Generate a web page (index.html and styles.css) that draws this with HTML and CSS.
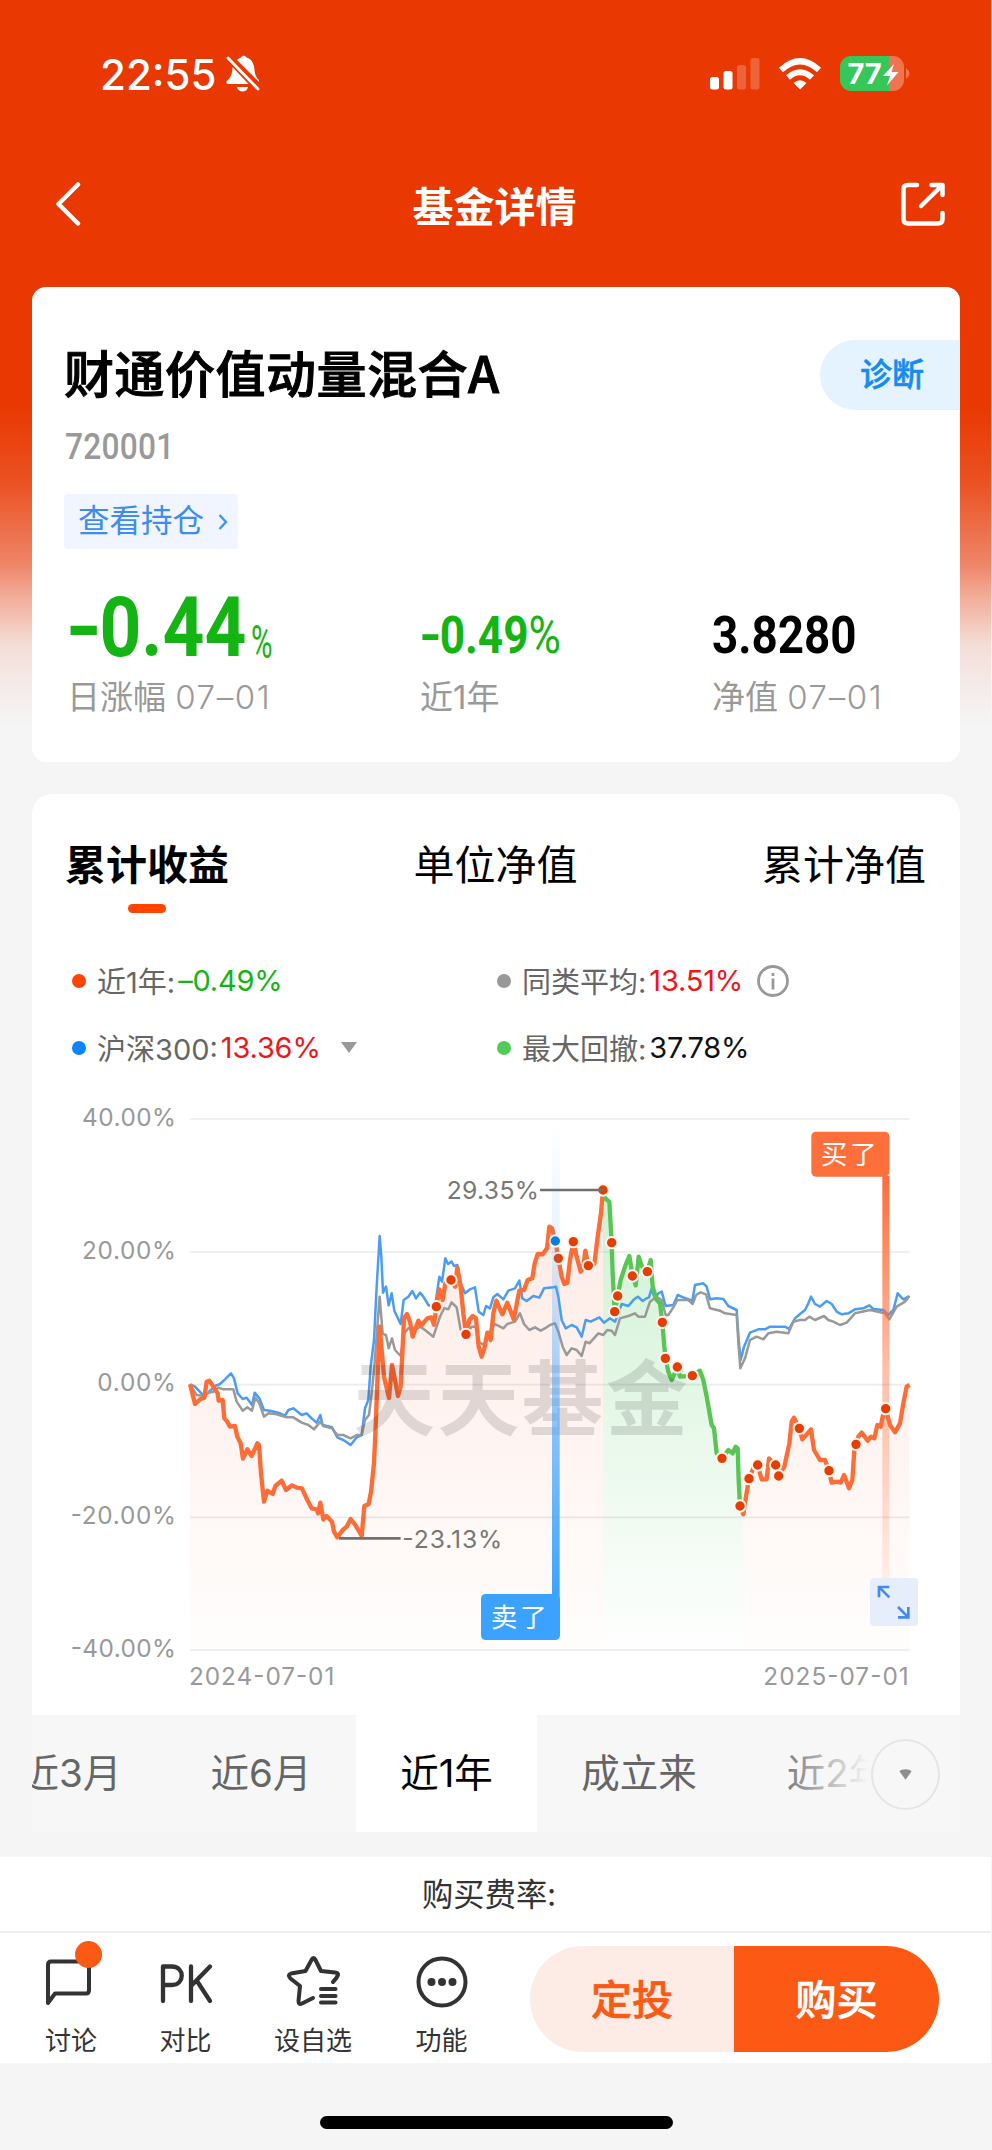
FILE: index.html
```html
<!DOCTYPE html>
<html lang="zh-CN">
<head>
<meta charset="utf-8">
<title>基金详情</title>
<link rel="stylesheet" href="styles.css">
</head>
<body>
<div class="phone">
  <header class="status">
    <div class="status-left">
      <span class="time">22:55</span>
      <svg class="bell" width="34" height="38" viewBox="0 0 34 38">
        <path fill="#fff" d="M11 5 C12 4 13.500 3 15 2.500 C16 0 19 0 20.500 2.500 C26 4 28 9 28.500 15 C29 20 30 22 33 25 L33 27 Z M7 9 L26 29 L2 29 C0 29 0 27 1 26 C5 22 6 19 6.500 13 Z M11 32 H22 C21 38 12 38 11 32 Z"/>
        <path stroke="#e93802" stroke-width="7" d="M1 1 L33 35"/>
        <path stroke="#fff" stroke-width="2.800" stroke-linecap="round" d="M2 3 L32 34"/>
      </svg>
    </div>
    <div class="status-right">
      <svg width="50" height="32" viewBox="0 0 50 32" fill="#fff">
        <rect x="0" y="19" width="9" height="12.500" rx="2.500"/><rect x="13.500" y="13" width="9" height="18.500" rx="2.500"/>
        <g opacity=".22"><rect x="27" y="7" width="9" height="24.500" rx="2.500"/><rect x="40.500" y="0" width="9" height="31.500" rx="2.500"/></g>
      </svg>
      <svg class="wifi" width="44" height="32" viewBox="0 0 44 32" fill="none" stroke="#fff" stroke-width="6">
        <path d="M3 12 Q22 -5.500 41 12"/><path d="M10 19.500 Q22 9 34 19.500"/><path fill="#fff" stroke="none" d="M15.500 25 Q22 19.500 28.500 25 L22 31.500Z"/>
      </svg>
      <svg width="72" height="36" viewBox="0 0 72 36">
        <defs><clipPath id="cell"><rect width="64" height="35" rx="11"/></clipPath></defs>
        <g clip-path="url(#cell)"><rect width="49" height="35" fill="#35c759"/><rect x="49" width="16" height="35" fill="#f07450"/></g>
        <path fill="#f07450" d="M66 12 Q73 17.500 66 23Z"/>
        <text x="7.500" y="28" class="cell-text" textLength="34">77</text>
        <path fill="#fff" d="M54 8 L43 20 H50 L47 29.500 L58.500 16 H51.500Z"/>
      </svg>
    </div>
  </header>

  <nav class="navbar">
    <svg width="26" height="46" viewBox="0 0 26 46" fill="none" stroke="#fff" stroke-width="4.500" stroke-linecap="round" stroke-linejoin="round"><path d="M23 3.500 L3.500 23 L23 42.500"/></svg>
    <h1>基金详情</h1>
    <svg width="46" height="46" viewBox="0 0 46 46" fill="none" stroke="#fff" stroke-width="4.500" stroke-linecap="round" stroke-linejoin="round"><path d="M17 4 H8 Q3.500 4 3.500 8 V38 Q3.500 42.500 8 42.500 H38 Q42.500 42.500 42.500 38 V32"/><path d="M31.500 4 H42.500 V14 M42 4.500 L21 25"/></svg>
  </nav>

  <section class="card summary">
    <div class="name-row"><h2>财通价值动量混合A</h2><span class="diagnose">诊断</span></div>
    <div class="code"><span class="din">720001</span></div>
    <div class="holdings"><span>查看持仓</span><svg width="10" height="18" viewBox="0 0 10 18" fill="none" stroke="#3d97f2" stroke-width="2.400"><path d="M1.500 2 L8 9 L1.500 16"/></svg></div>
    <div class="stats">
      <div><div class="value green big"><span class="din"><s>-</s>0.44</span><span class="din pct">%</span></div><div class="label">日涨幅 <i>07–01</i></div></div>
      <div><div class="value green"><span class="din mid"><s>-</s>0.49<b>%</b></span></div><div class="label">近1年</div></div>
      <div><div class="value"><span class="din">3.8280</span></div><div class="label">净值 <i>07–01</i></div></div>
    </div>
  </section>

  <section class="card trend">
    <div class="tabs"><span class="tab on">累计收益</span><span class="tab">单位净值</span><span class="tab">累计净值</span></div>
    <div class="legend">
      <div class="item"><i class="dot orange"></i><span>近1年:</span><em class="green">–0.49%</em></div>
      <div class="item"><i class="dot gray"></i><span>同类平均:</span><em class="red">13.51%</em>
        <svg class="info" width="32" height="32" viewBox="0 0 32 32" fill="none" stroke="#999" stroke-width="2.800"><circle cx="16" cy="16" r="14.500"/><path d="M16 13.500 V24.500"/><path d="M16 8 V11"/></svg></div>
      <div class="item"><i class="dot blue"></i><span>沪深300:</span><em class="red">13.36%</em>
        <svg class="caret" width="16" height="11" viewBox="0 0 16 11" fill="#999"><path d="M0 0 H16 L8 11Z"/></svg></div>
      <div class="item"><i class="dot lime"></i><span>最大回撤:</span><em class="dark">37.78%</em></div>
    </div>

    <svg class="chart" viewBox="-414 -30 2784 1875">
      <defs>
        <linearGradient id="warm" gradientUnits="userSpaceOnUse" x1="0" y1="270" x2="0" y2="1650"><stop offset="0" stop-color="#f4511e" stop-opacity=".12"/><stop offset="1" stop-color="#f4511e" stop-opacity=".01"/></linearGradient>
        <linearGradient id="fresh" gradientUnits="userSpaceOnUse" x1="0" y1="270" x2="0" y2="1620"><stop offset="0" stop-color="#40c850" stop-opacity=".25"/><stop offset="1" stop-color="#40c850" stop-opacity=".01"/></linearGradient>
        <linearGradient id="sell" gradientUnits="userSpaceOnUse" x1="0" y1="70" x2="0" y2="1482"><stop offset="0" stop-color="#3ba3ff" stop-opacity="0"/><stop offset=".3" stop-color="#3ba3ff" stop-opacity=".15"/><stop offset=".6" stop-color="#3ba3ff" stop-opacity=".55"/><stop offset="1" stop-color="#3ba3ff"/></linearGradient>
        <linearGradient id="buy" gradientUnits="userSpaceOnUse" x1="0" y1="230" x2="0" y2="1490"><stop offset="0" stop-color="#ff6c39"/><stop offset=".45" stop-color="#ff6c39" stop-opacity=".45"/><stop offset="1" stop-color="#ff6c39" stop-opacity=".06"/></linearGradient>
      </defs>

      <g class="grid"><path d="M60 57 H2219 M60 456 H2219 M60 854 H2219 M60 1252 H2219 M60 1650 H2219"/></g>
      <g class="axis" text-anchor="end">
        <text x="18" y="77" textLength="282">40.00%</text><text x="18" y="476" textLength="282">20.00%</text><text x="18" y="874" textLength="236">0.00%</text><text x="18" y="1272" textLength="316">-20.00%</text><text x="18" y="1670" textLength="316">-40.00%</text>
      </g>
      <g class="axis"><text x="57" y="1755" textLength="436">2024-07-01</text><text x="1780" y="1755" textLength="436">2025-07-01</text></g>

      <path fill="url(#warm)" d="M60 853 L75 912 90 898 103 893 110 845 118 842 143 880 158 900 163 955 180 980 195 978 202 1010 212 1030 219 1076 232 1048 245 1068 262 1030 267 1035 273 1120 282 1205 292 1172 308 1182 316 1158 335 1142 348 1170 366 1156 396 1165 425 1225 444 1240 451 1208 460 1258 486 1265 502 1312 542 1257 575 1308 583 1218 596 1212 603 1175 612 1090 617 980 629 680 657 894 666 795 684 888 692 860 702 655 711 642 728 710 745 662 792 674 808 568 843 540 862 503 872 560 888 703 908 648 918 655 935 770 952 698 962 720 979 602 997 643 1012 608 1031 658 1048 572 1062 570 1087 535 1103 462 1131 445 1138 380 1156 423 1183 552 1192 548 1210 425 1232 515 1246 452 1255 497 1273 492 1283 410 1299 270 V1650 H60Z"/>
      <path fill="url(#fresh)" d="M1299 270 L1305 295 1318 305 1325 428 1334 635 1352 540 1378 468 1397 556 1406 470 1432 515 1442 480 1448 560 1470 610 1487 775 1505 840 1522 802 1567 827 1590 815 1610 890 1625 975 1640 1060 1656 1075 1675 1050 1703 1045 1710 1218 1720 1243 V1650 H1299Z"/>
      <path fill="url(#warm)" d="M1720 1243 L1737 1136 1763 1095 1775 1138 1790 1138 1797 1075 1826 1128 1843 1100 1858 1030 1872 953 1897 1018 1923 988 1932 1050 1965 1080 1985 1148 2012 1148 2022 1125 2037 1165 2047 1140 2058 1033 2075 998 2093 1022 2113 1015 2147 926 2175 997 2190 970 2210 860 2218 853 V1650 H1720Z"/>

      <path class="line thin blue-line" d="M60 853 L75 860 97 883 112 880 135 858 150 852 165 838 183 820 192 835 203 880 218 897 230 893 246 915 254 878 268 895 282 930 300 932 325 938 345 947 355 930 370 925 395 945 410 940 425 955 440 968 451 945 458 975 486 982 502 1012 520 1020 542 1035 560 1012 575 1005 585 925 595 900 602 800 612 720 620 560 629 408 634 470 639 578 648 560 656 616 665 580 673 632 692 672 701 600 715 590 727 573 738 595 750 578 760 590 775 615 790 622 798 600 808 530 816 545 826 475 834 492 845 485 852 498 862 495 872 550 885 580 900 568 915 562 926 635 940 645 948 618 960 625 970 592 982 582 1000 598 1015 572 1035 565 1048 542 1057 595 1070 603 1090 588 1108 593 1122 565 1150 562 1158 560 1165 590 1175 660 1187 685 1205 675 1220 682 1235 710 1247 660 1262 665 1288 652 1302 668 1320 655 1335 665 1345 640 1355 612 1375 618 1392 598 1404 590 1418 603 1430 595 1437 592 1444 568 1455 595 1465 580 1475 575 1487 618 1510 615 1523 585 1540 592 1567 602 1575 555 1600 550 1610 560 1620 598 1640 595 1660 597 1675 618 1700 630 1706 720 1712 780 1722 740 1740 698 1765 688 1785 688 1800 680 1845 680 1857 687 1875 655 1890 642 1905 630 1915 610 1923 590 1935 612 1950 620 1970 603 1985 612 2000 635 2015 643 2035 640 2055 628 2080 625 2098 616 2110 627 2140 630 2155 645 2170 630 2183 580 2200 598 2218 588"/>
      <path class="line thin gray-line" d="M60 853 L80 885 100 888 115 878 130 875 145 863 160 868 190 868 200 905 218 932 232 922 246 932 256 893 268 910 282 950 295 940 320 943 350 952 370 952 395 968 415 975 432 988 451 965 460 978 486 985 502 1005 520 1005 542 1015 560 1005 575 1005 585 960 597 945 605 880 613 800 622 680 629 590 638 702 648 705 656 745 666 715 675 750 692 768 703 700 715 685 735 690 750 680 765 690 790 710 800 680 810 650 822 625 835 628 845 607 860 622 872 690 890 700 905 680 918 680 928 728 945 735 955 700 975 672 1000 685 1012 672 1035 665 1050 640 1062 672 1078 690 1095 682 1112 692 1130 682 1140 675 1155 670 1165 695 1178 740 1190 765 1205 745 1220 750 1235 768 1247 725 1258 730 1285 700 1300 705 1312 690 1325 692 1335 705 1350 655 1375 648 1395 640 1405 650 1425 650 1440 605 1460 590 1475 600 1487 645 1495 645 1510 622 1522 600 1555 600 1568 612 1578 585 1592 577 1608 583 1620 625 1650 632 1665 640 1700 645 1706 740 1711 805 1725 775 1740 720 1760 710 1780 718 1795 700 1820 695 1855 700 1870 665 1890 660 1905 660 1918 650 1935 660 1962 648 1975 660 1990 665 2010 675 2030 668 2055 640 2100 630 2145 640 2158 658 2180 620 2205 605 2218 588"/>
      <path class="line fund" d="M60 853 L75 912 90 898 103 893 110 845 118 842 130 860 143 880 146 902 158 900 163 955 172 965 180 980 195 978 202 1010 212 1030 219 1076 232 1048 245 1068 262 1030 267 1035 273 1120 282 1205 292 1172 308 1182 316 1158 335 1142 348 1170 366 1156 380 1163 396 1165 412 1200 425 1225 440 1228 444 1240 451 1208 460 1258 470 1248 486 1265 492 1295 502 1312 518 1290 530 1280 542 1257 556 1275 575 1308 583 1218 596 1212 603 1175 612 1090 617 980 623 820 629 680 636 760 642 830 657 894 666 795 675 840 684 888 692 860 697 760 702 655 711 642 720 665 728 710 745 662 754 676 772 655 784 652 792 674 799 620 808 568 818 600 826 550 843 540 855 560 862 503 872 560 880 640 888 703 898 660 908 648 918 655 926 740 935 770 943 745 952 698 962 720 970 640 979 602 997 643 1012 608 1031 658 1048 572 1062 570 1073 540 1087 535 1094 490 1103 462 1118 463 1131 445 1138 380 1146 385 1156 423 1165 475 1175 530 1183 552 1192 548 1200 480 1210 425 1220 470 1232 515 1240 500 1246 452 1255 497 1273 492 1283 410 1293 340 1299 270"/>
      <path class="line fund" d="M1710 1218 L1720 1243 1728 1190 1737 1136 1750 1105 1763 1095 1775 1138 1790 1138 1797 1075 1817 1095 1826 1128 1843 1100 1858 1030 1865 965 1872 953 1888 985 1897 1018 1923 988 1932 1050 1950 1080 1965 1080 1977 1112 1985 1148 2000 1145 2012 1148 2022 1125 2037 1165 2047 1140 2053 1050 2058 1033 2065 1010 2075 998 2093 1022 2103 1010 2113 1015 2122 975 2132 980 2140 940 2147 926 2160 975 2175 997 2190 970 2200 910 2210 860 2219 855"/>
      <path class="line fall" d="M1299 275 L1305 295 1318 305 1325 428 1328 520 1334 635 1343 588 1352 540 1365 500 1378 468 1388 528 1397 556 1406 470 1416 500 1432 515 1442 480 1448 560 1460 600 1470 610 1477 667 1483 740 1487 775 1495 815 1505 840 1522 802 1530 830 1567 827 1590 812 1600 840 1610 890 1625 975 1632 985 1640 1060 1656 1075 1675 1050 1688 1060 1697 1040 1703 1045 1706 1140 1710 1218"/>

      <text class="watermark" x="550" y="988" textLength="1003">天天基金</text>

      <g class="trades">
        <circle cx="799" cy="620" r="17"/><circle cx="843" cy="540" r="17"/><circle cx="888" cy="703" r="17"/><circle cx="1165" cy="475" r="17"/><circle cx="1210" cy="425" r="17"/><circle cx="1255" cy="497" r="17"/><circle cx="1299" cy="270" r="17"/><circle cx="1325" cy="428" r="17"/><circle cx="1343" cy="588" r="17"/><circle cx="1334" cy="635" r="17"/><circle cx="1387" cy="528" r="17"/><circle cx="1432" cy="515" r="17"/><circle cx="1477" cy="667" r="17"/><circle cx="1486" cy="775" r="17"/><circle cx="1522" cy="801" r="17"/><circle cx="1567" cy="827" r="17"/><circle cx="1656" cy="1075" r="17"/><circle cx="1710" cy="1218" r="17"/><circle cx="1737" cy="1136" r="17"/><circle cx="1763" cy="1095" r="17"/><circle cx="1817" cy="1095" r="17"/><circle cx="1826" cy="1128" r="17"/><circle cx="1888" cy="985" r="17"/><circle cx="1977" cy="1112" r="17"/><circle cx="2058" cy="1033" r="17"/>
      </g>
      <rect x="1146" y="70" width="23" height="1420" fill="url(#sell)"/>
      <rect x="2137" y="228" width="21" height="1262" fill="url(#buy)"/>
      <g class="trades"><circle cx="1156" cy="423" r="17" class="sold"/><circle cx="2147" cy="926" r="17"/></g>

      <path class="leader" d="M1110 270 H1299 M507 1315 H692"/>
      <g class="peak"><text x="830" y="296" textLength="277">29.35%</text><text x="697" y="1343" textLength="300">-23.13%</text></g>

      <rect x="1924" y="95" width="234" height="135" rx="14" fill="#ff6f3c"/><text class="tag" x="1952" y="192" textLength="168">买了</text>
      <rect x="933" y="1482" width="237" height="138" rx="14" fill="#3ba3ff"/><text class="tag" x="962" y="1581" textLength="168">卖了</text>

      <rect x="2100" y="1434" width="144" height="144" rx="12" fill="#e3ecfc" fill-opacity=".9"/>
      <path class="expand" d="M2127 1492 V1461 H2158 M2129 1463 L2158 1492 M2184 1552 H2215 V1521 M2213 1550 L2184 1521"/>
    </svg>

    <div class="ranges">
      <span class="cut">近3月</span><span>近6月</span><span class="on">近1年</span><span>成立来</span><span class="last">近2年</span>
      <div class="more"><svg width="15" height="11" viewBox="0 0 16 11" fill="#8e8e8e"><path d="M0 0 H16 L8 11Z"/></svg></div>
    </div>
  </section>

  <footer class="bottom">
    <div class="fee">购买费率:</div>
    <div class="actions">
      <div class="act talk"><svg width="60" height="68" viewBox="0 0 60 68" fill="none" stroke="#333" stroke-width="4" stroke-linejoin="round"><path d="M7 54 V17 Q7 13.500 10 13.500 H48 V42 Q48 45.500 45 45.500 H14 L7 55Z"/><circle cx="47.500" cy="6.500" r="13.500" fill="#fc5a14" stroke="none"/></svg><span>讨论</span></div>
      <div class="act pk"><svg width="60" height="68" viewBox="0 0 60 68" fill="none" stroke="#333" stroke-width="4.300" stroke-linecap="round" stroke-linejoin="round"><path d="M7 53 V18.500 H16 C29 18.500 29 37 16 37 H7 M35 18.500 V53 M54 18.500 L35 38 M41 33 L54 53"/></svg><span>对比</span></div>
      <div class="act fav"><svg width="60" height="68" viewBox="0 0 60 68" fill="none" stroke="#333" stroke-width="4" stroke-linecap="round" stroke-linejoin="round"><path d="M50 34 Q54 30 55 27 Q55.500 25 52 24.500 L38 23 L32.500 12 Q30.500 8 28.500 12 L22.500 23 L8 25.500 Q4 27 7.500 30.500 L17 38 L15.500 53 Q15.500 57 19 55.500 L30 50"/><path d="M38 41 H52.500 M38 48 H52.500 M38 54.500 H52.500"/></svg><span>设自选</span></div>
      <div class="act func"><svg width="60" height="68" viewBox="0 0 60 68" fill="#333"><circle cx="30" cy="34" r="23.500" fill="none" stroke="#333" stroke-width="4"/><circle cx="19.500" cy="34" r="4"/><circle cx="30" cy="34" r="4"/><circle cx="40.500" cy="34" r="4"/></svg><span>功能</span></div>
      <div class="buttons"><span class="plan">定投</span><span class="buy">购买</span></div>
    </div>
  </footer>
  <div class="home"><i></i></div>
</div>
</body>
</html>
```
FILE: styles.css
```css
* { box-sizing: border-box; }
body { margin: 0; background: #f5f5f5; font-family: Inter, "Noto Sans CJK SC", sans-serif; color: #000; }
h1, h2 { margin: 0; }
i, em { font-style: normal; }
svg { display: block; flex: none; }
.phone { width: 991px; height: 2150px; overflow: hidden; display: flex; flex-direction: column;
  background: linear-gradient(#e93802 0, #e93802 405px, #eb5021 480px, #ee8466 563px, #f1ad99 597px, #f4dfd9 647px, #f5f5f5 725px); }

.status { height: 148px; flex: none; display: flex; justify-content: space-between; padding: 0 81px 0 100px; color: #fff; }
.status-left, .status-right { display: flex; align-items: center; }
.time { font-size: 42px; font-weight: 500; line-height: 50px; width: 117px; white-space: nowrap; padding-top: 2px; }
.bell { margin-left: 9px; }
.status-right { gap: 17px; }
.wifi { margin-left: 1px; }
.status-right svg:last-child { margin-left: 1px; margin-right: -2px; }
.cell-text { font: 700 29px Inter, sans-serif; fill: #fff; }

.navbar { height: 139px; flex: none; display: flex; justify-content: space-between; align-items: center; padding: 0 45px 22px 55px; color: #fff; }
.navbar svg { margin-top: -5px; }
.navbar h1 { font: 700 41px/50px "Noto Sans CJK SC", sans-serif; margin: -6px 0 0 8px; }

.card { margin: 0 0 0 32px; width: 928px; background: #fff; flex: none; }
.summary { height: 475px; border-radius: 14px; padding: 53px 0 0 32px; overflow: hidden; }
.name-row { height: 69px; display: flex; justify-content: space-between; align-items: center; }
.name-row h2 { font: 500 50px/60px "Noto Sans CJK SC", sans-serif; letter-spacing: .5px; margin-top: -7px; -webkit-text-stroke: 1px #000; }
.diagnose { width: 140px; height: 70px; border-radius: 35px 0 0 35px; background: #e5f3ff; color: #168bf5; font: 500 32px/64px "Noto Sans CJK SC", sans-serif; padding-left: 40px; -webkit-text-stroke: .5px #168bf5; }
.din { display: inline-block; font-family: Roboto, sans-serif; transform: scaleX(.88); transform-origin: 0 50%; white-space: nowrap; }
.din s { display: inline-block; text-decoration: none; transform: scaleX(1.3); transform-origin: 0 50%; margin: 0 .07em 0 -.02em; }
.code { height: 42px; margin-top: 16px; font-size: 36px; line-height: 42px; font-weight: 500; color: #999; padding-left: 1px; letter-spacing: .3px; }
.holdings { width: 174px; height: 55px; margin-top: 27px; background: #f0f5ff; border-radius: 4px; display: flex; align-items: center; padding-left: 14px; gap: 14px; color: #3d8cee; font: 400 31.500px/50px "Noto Sans CJK SC", sans-serif; }
.holdings span { margin-top: -7px; }
.stats { display: grid; grid-template-columns: 353px 292px auto; padding-left: 3px; margin-top: 27px; }
.value { height: 88px; display: flex; align-items: flex-end; font-size: 52px; line-height: 61px; font-weight: 700; }
.value .din { height: 59px; }
.value.big { font-size: 83px; }
.value.big .din { height: 85px; line-height: 98px; }
.value.big .pct { font-size: 46px; font-weight: 400; height: 60px; line-height: 77px; margin-left: -20px; transform: scaleX(.64); }
.value b { font-weight: 400; }
.value .mid { transform: scaleX(.85); }
.label { margin-top: 8px; font: 400 33px/50px Inter, "Noto Sans CJK SC", sans-serif; color: #999; }
.label i { font-weight: 300; letter-spacing: 1.6px; }
.green { color: #15b415; }
.red { color: #f21518; }
.dark { color: #111; }

.trend { height: 1038px; margin-top: 32px; border-radius: 20px 20px 0 0; display: flex; flex-direction: column; overflow: hidden; }
.tabs { height: 153px; flex: none; display: flex; justify-content: space-between; padding: 39px 34px 0 33px; font: 400 41px/58px "Noto Sans CJK SC", sans-serif; }
.tab { display: flex; flex-direction: column; align-items: center; }
.tab.on { font-weight: 700; }
.tab.on::after { content: ""; width: 38px; height: 9px; border-radius: 5px; background: #ff4500; margin-top: 13px; }
.legend { height: 143px; flex: none; display: grid; grid-template-columns: 425px auto; grid-template-rows: 67px 67px; padding-left: 40px; font-size: 29px; color: #666; }
.item { display: flex; align-items: center; white-space: nowrap; }
.item span { margin-top: -2px; }
.dot { width: 14px; height: 14px; border-radius: 50%; margin-right: 11px; }
.orange { background: #ff4500; } .gray { background: #999; } .blue { background: #0a84ff; } .lime { background: #53cb59; }
.item em { margin-left: 3px; letter-spacing: -.2px; }
.info { margin-left: 14px; } .caret { margin-left: 20px; }

.chart { width: 928px; height: 625px; }
.grid { fill: none; stroke: #ececee; stroke-width: 5; }
.axis { font: 400 73px Inter, sans-serif; fill: #999; }
.line { fill: none; stroke-linejoin: round; }
.thin { stroke-width: 7.5; } .blue-line { stroke: #4b9cf5; } .gray-line { stroke: #999; }
.fund { stroke: #ff6c35; stroke-width: 13; } .fall { stroke: #57c653; stroke-width: 13; }
.watermark { font: 700 245px "Noto Sans CJK SC", sans-serif; fill: #000; fill-opacity: .12; }
.trades circle { fill: #e63d00; stroke: #fff3ed; stroke-width: 6; }
.trades .sold { fill: #087ce8; }
.leader { stroke: #707070; stroke-width: 8; }
.peak { font: 400 74px Inter, sans-serif; fill: #777; }
.tag { font: 400 80px "Noto Sans CJK SC", sans-serif; fill: #fff; }
.expand { fill: none; stroke: #4389f0; stroke-width: 8; }

.ranges { position: relative; height: 117px; flex: none; background: #f7f7f7; display: flex; font: 400 38.500px/117px Inter, "Noto Sans CJK SC", sans-serif; color: #666; overflow: hidden; }
.ranges span { text-align: center; white-space: nowrap; }
.ranges span:nth-child(1) { width: 130px; margin-left: -26px; margin-right: 23px; }
.ranges span:nth-child(2) { width: 197px; padding-left: 7px; }
.ranges .on { width: 181px; background: #fff; color: #000; }
.ranges span:nth-child(4) { width: 204px; }
.ranges .last { width: 160px; padding-left: 32px; }
.more { position: absolute; right: 0; top: 0; width: 190px; height: 117px; padding: 24px 20px 0 101px; background: linear-gradient(90deg, #f7f7f700, #f7f7f7 52%); }
.more svg { box-sizing: content-box; padding: 28px 25px; border: 2px solid #e5e5e5; border-radius: 50%; }

.bottom { margin-top: 25px; height: 206px; flex: none; background: #fff; }
.fee { height: 76px; border-bottom: 2px solid #eee; text-align: center; font: 400 31.300px/72px "Noto Sans CJK SC", sans-serif; color: #333; padding-right: 13px; }
.actions { height: 130px; display: flex; align-items: flex-start; }
.act { display: flex; flex-direction: column; align-items: center; padding-top: 15px; font: 400 26px/38px "Noto Sans CJK SC", sans-serif; color: #333; }
.talk { width: 142px; } .pk { width: 87px; } .fav { width: 168px; } .func { width: 89px; margin-right: 44px; }
.act svg { height: 68px; overflow: visible; }
.act span { margin-top: 4px; }
.buttons { width: 409px; height: 106px; margin-top: 13px; border-radius: 53px; overflow: hidden; display: flex; font: 500 41px/103px "Noto Sans CJK SC", sans-serif; text-align: center; }
.plan { width: 204px; background: #fcece5; color: #fc5a14; -webkit-text-stroke: .6px #fc5a14; }
.buy { width: 205px; background: #fc5a14; color: #fff; -webkit-text-stroke: .6px #fff; }
.home { flex: 1; display: flex; justify-content: center; padding-top: 53px; background: #f5f5f5; }
.home i { width: 353px; height: 13px; border-radius: 7px; background: #000; margin-left: 2px; }
```
